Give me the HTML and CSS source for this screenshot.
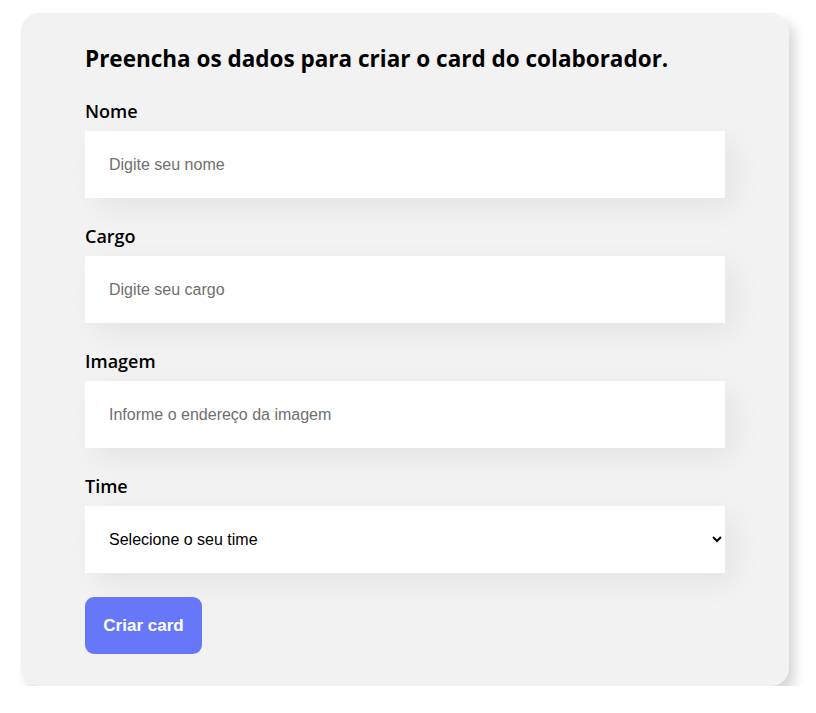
FILE: index.html
```html
<!DOCTYPE html>
<html lang="pt-BR">
<head>
<meta charset="utf-8">
<title>Formulário</title>
<link rel="stylesheet" href="styles.css">
</head>
<body>
<form class="card">
  <h2 class="title">Preencha os dados para criar o card do colaborador.</h2>
  <div class="field">
    <label class="label">Nome</label>
    <input class="input" type="text" placeholder="Digite seu nome">
  </div>
  <div class="field">
    <label class="label">Cargo</label>
    <input class="input" type="text" placeholder="Digite seu cargo">
  </div>
  <div class="field">
    <label class="label">Imagem</label>
    <input class="input" type="text" placeholder="Informe o endereço da imagem">
  </div>
  <div class="field">
    <label class="label">Time</label>
    <select class="input select">
      <option>Selecione o seu time</option>
    </select>
  </div>
  <button class="button" type="button">Criar card</button>
</form>
</body>
</html>
```
FILE: styles.css
```css
html, body {
  margin: 0;
  padding: 0;
  background: #ffffff;
}
.card {
  box-sizing: border-box;
  width: 768px;
  margin: 13px 0 0 21px;
  padding: 32px 64px 32px 64px;
  background: #f2f2f2;
  border-radius: 18px;
  box-shadow: 6px 8px 12px rgba(0, 0, 0, 0.16);
  display: flex;
  flex-direction: column;
  align-items: flex-start;
}
.title {
  margin: 0;
  font-family: "Open Sans", sans-serif;
  font-weight: 700;
  font-size: 22.5px;
  line-height: 28px;
  color: #000;
}
.field {
  width: 100%;
  margin-top: 26px;
  display: flex;
  flex-direction: column;
}
.label {
  font-family: "Open Sans", sans-serif;
  font-weight: 600;
  font-size: 18px;
  line-height: 24px;
  color: #000;
  margin-bottom: 8px;
}
.input {
  box-sizing: border-box;
  width: 100%;
  height: 67px;
  border: none;
  outline: none;
  background: #fff;
  padding: 0 24px;
  font-family: "Liberation Sans", sans-serif;
  font-size: 16px;
  color: #000;
  box-shadow: 10px 10px 30px rgba(0, 0, 0, 0.06);
  border-radius: 0;
}
.input::placeholder {
  color: #6f6f6f;
}
.select {
  padding-left: 20px;
  padding-right: 6px;
}
.button {
  margin-top: 24px;
  width: 117px;
  height: 57px;
  border: none;
  border-radius: 9px;
  background: #6678f9;
  color: #fff;
  font-family: "Liberation Sans", sans-serif;
  font-weight: 700;
  font-size: 17px;
  cursor: pointer;
}
```
